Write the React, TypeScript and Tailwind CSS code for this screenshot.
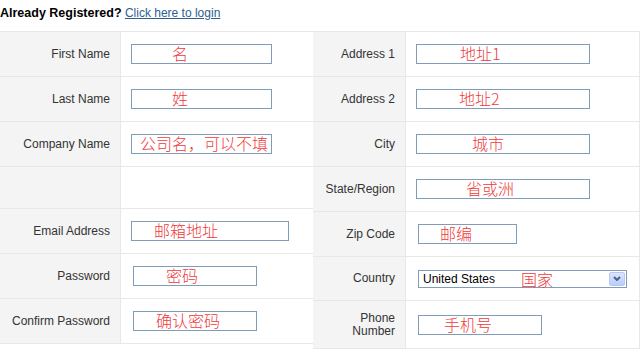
import React from 'react';

type Field = {
  label: React.ReactNode;
  value?: string;
  width?: number;
  ml?: string;
  pl?: string;
  h: string;
  kind?: 'input' | 'select' | 'empty';
};

const LEFT: Field[] = [
  { label: 'First Name', value: '名', h: 'h-[45px]', ml: 'ml-[10px]', pl: 'pl-[40px]', width: 141 },
  { label: 'Last Name', value: '姓', h: 'h-[45px]', ml: 'ml-[10px]', pl: 'pl-[40px]', width: 141 },
  { label: 'Company Name', value: '公司名，可以不填', h: 'h-[45px]', ml: 'ml-[10px]', pl: 'pl-[8px]', width: 141 },
  { label: '', h: 'h-[42px]', kind: 'empty' },
  { label: 'Email Address', value: '邮箱地址', h: 'h-[45px]', ml: 'ml-[10px]', pl: 'pl-[22px]', width: 158 },
  { label: 'Password', value: '密码', h: 'h-[45px]', ml: 'ml-[12px]', pl: 'pl-[32px]', width: 124 },
  { label: 'Confirm Password', value: '确认密码', h: 'h-[45px]', ml: 'ml-[12px]', pl: 'pl-[22px]', width: 124 },
];

const RIGHT: Field[] = [
  { label: 'Address 1', value: '地址1', h: 'h-[45px]', ml: 'ml-[10px]', pl: 'pl-[43px]', width: 174 },
  { label: 'Address 2', value: '地址2', h: 'h-[45px]', ml: 'ml-[10px]', pl: 'pl-[42px]', width: 174 },
  { label: 'City', value: '城市', h: 'h-[45px]', ml: 'ml-[10px]', pl: 'pl-[55px]', width: 174 },
  { label: 'State/Region', value: '省或洲', h: 'h-[45px]', ml: 'ml-[10px]', pl: 'pl-[49px]', width: 174 },
  { label: 'Zip Code', value: '邮编', h: 'h-[45px]', ml: 'ml-[12px]', pl: 'pl-[21px]', width: 99 },
  { label: 'Country', h: 'h-[44px]', kind: 'select' },
  {
    label: (
      <>
        Phone
        <br />
        Number
      </>
    ),
    value: '手机号',
    h: 'h-[48px]',
    ml: 'ml-[12px]',
    pl: 'pl-[25px]',
    width: 124,
  },
];

const TextBox = ({ f }: { f: Field }) => (
  <div
    className={`${f.ml} ${f.pl} h-[20px] pb-px border border-[#7f9db9] bg-white flex items-center text-[16px] leading-[17px] font-light text-[#ee3b3b] whitespace-nowrap`}
    style={{ width: f.width, fontFamily: '"Noto Sans CJK SC", sans-serif' }}
  >
    {f.value}
  </div>
);

const CountrySelect = () => (
  <div className="ml-[12px] w-[209px] h-[18px] border border-[#7f9db9] bg-white flex items-center">
    <span className="pl-[4px] text-[12px] leading-[16px] text-black">United States</span>
    <span className="ml-[26px] text-[16px] leading-[16px] font-light text-[#ee3b3b] font-['Noto_Sans_CJK_SC',sans-serif]">国家</span>
    <div className="ml-auto mr-px w-[16px] h-[14px] rounded-[2px] border border-[#b7c9f3] bg-gradient-to-b from-[#dbe5fe] to-[#b9cdfb] flex items-center justify-center">
      <svg width="8" height="5" viewBox="0 0 8 5">
        <path d="M1 1 L4 4 L7 1" fill="none" stroke="#4d6185" strokeWidth="2" />
      </svg>
    </div>
  </div>
);

const Row = ({ f, labelW }: { f: Field; labelW: string }) => (
  <div className={`flex ${f.h} border-b border-[#e8e8e8]`}>
    <div
      className={`${labelW} shrink-0 bg-[#f4f4f4] border-r border-[#e8e8e8] flex items-center justify-end pr-[10px] text-right text-[12px] leading-[13px] text-[#333]`}
    >
      {f.label}
    </div>
    <div className="flex-1 flex items-center">
      {f.kind === 'select' ? <CountrySelect /> : f.kind === 'empty' ? null : <TextBox f={f} />}
    </div>
  </div>
);

export default function App() {
  return (
    <div className="w-[641px] h-[358px] bg-white overflow-hidden font-['Liberation_Sans',sans-serif]">
      <div className="h-[31px] pt-[5px] text-[12px] leading-[16px]">
        <span className="font-bold text-[12.5px] text-black">Already Registered?</span>{' '}
        <a href="#" className="text-[#2e5f8f] underline">Click here to login</a>
      </div>
      <div className="flex items-start">
        <div className="w-[313px] border-t border-[#e8e8e8]">
          {LEFT.map((f, i) => (
            <Row key={i} f={f} labelW="w-[121px]" />
          ))}
        </div>
        <div className="w-[327px] border-t border-r border-[#e8e8e8]">
          {RIGHT.map((f, i) => (
            <Row key={i} f={f} labelW="w-[93px]" />
          ))}
        </div>
      </div>
    </div>
  );
}
